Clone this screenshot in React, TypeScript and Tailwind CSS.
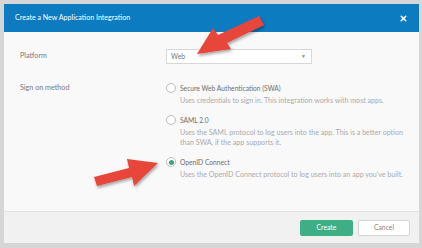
import { X } from "lucide-react";

const options = [
  {
    id: "swa",
    title: "Secure Web Authentication (SWA)",
    desc: ["Uses credentials to sign in. This integration works with most apps."],
    checked: false,
  },
  {
    id: "saml",
    title: "SAML 2.0",
    desc: [
      "Uses the SAML protocol to log users into the app. This is a better option",
      "than SWA, if the app supports it.",
    ],
    checked: false,
  },
  {
    id: "oidc",
    title: "OpenID Connect",
    desc: ["Uses the OpenID Connect protocol to log users into an app you've built."],
    checked: true,
  },
];

function Radio({ checked }: { checked: boolean }) {
  return (
    <span className="w-[10px] h-[10px] rounded-full border border-[#bdbdbd] bg-white flex items-center justify-center shrink-0">
      {checked && <span className="w-[5px] h-[5px] rounded-full bg-[#3aa57f]" />}
    </span>
  );
}

// 赤い矢印（スクリーンショットの注釈）
function Arrows() {
  return (
    <svg className="absolute inset-0 pointer-events-none" width="422" height="248" viewBox="0 0 422 248">
      <defs>
        <filter id="sh" x="-20%" y="-20%" width="140%" height="140%">
          <feDropShadow dx="1" dy="2" stdDeviation="1.5" floodColor="#000" floodOpacity="0.35" />
        </filter>
      </defs>
      <g fill="#e8443a" filter="url(#sh)">
        <path d="M259 16 L264 25 L227 43 L231 49 L197 54 L213 28 L218 35 Z" />
        <path d="M94 177 L129 168 L127 159 L158 163 L134 186 L132 177 L97 186 Z" />
      </g>
    </svg>
  );
}

export default function App() {
  return (
    <div
      className="relative w-[422px] h-[248px] bg-[#d6d6d6] pt-[4px] pl-[4px] overflow-hidden"
      style={{ fontFamily: "Lato, 'Open Sans', Arial, sans-serif" }}
    >
      <div className="w-[415px] h-[239px] bg-[#f9f9f9] flex flex-col">
        {/* ヘッダー */}
        <div className="h-[28px] bg-[#0c7bc0] flex items-center justify-between pl-[11px] pr-[11px]">
          <span className="text-white text-[7.1px]">Create a New Application Integration</span>
          <X className="w-[9px] h-[9px] text-white" strokeWidth={4} />
        </div>

        {/* 本文 */}
        <div className="flex-1 pl-[16px] pt-[17px] text-[7.2px] text-[#7a7a7a]">
          <div className="flex items-center h-[15px]">
            <span className="w-[146px]">Platform</span>
            <div className="w-[146px] h-[15px] bg-white border border-[#d8d8d8] flex items-center justify-between pl-[4px] pr-[5px]">
              <span className="text-[#777] text-[6.8px]">Web</span>
              <span className="text-[5px] text-[#888]">▼</span>
            </div>
          </div>

          <div className="flex mt-[19px]">
            <span className="w-[146px] leading-[10px]">Sign on method</span>
            <div className="flex flex-col gap-[9px]">
              {options.map((o) => (
                <div key={o.id}>
                  <div className="flex items-center gap-[4px] h-[10px]">
                    <Radio checked={o.checked} />
                    <span className="text-[#6e6e6e] text-[6.7px]">{o.title}</span>
                  </div>
                  <div className="mt-[3px] pl-[14px] text-[7.1px] leading-[10px] text-[#ababab]">
                    {o.desc.map((d) => (
                      <div key={d}>{d}</div>
                    ))}
                  </div>
                </div>
              ))}
            </div>
          </div>
        </div>

        {/* フッター */}
        <div className="h-[32px] bg-[#f1f1f1] border-t border-[#e2e2e2] flex items-center justify-end gap-[5px] pr-[9px]">
          <button className="w-[53px] h-[16px] rounded-[2px] bg-[#3eae87] text-white text-[6.8px]">Create</button>
          <button className="w-[52px] h-[16px] rounded-[2px] bg-white border border-[#d6d6d6] text-[#888] text-[6.8px]">
            Cancel
          </button>
        </div>
      </div>
      <Arrows />
    </div>
  );
}
